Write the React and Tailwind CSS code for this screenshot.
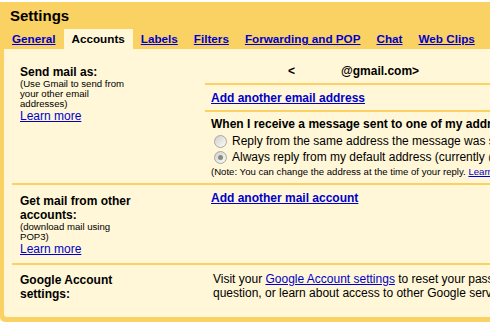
import React from 'react';

const tabs = ['General', 'Accounts', 'Labels', 'Filters', 'Forwarding and POP', 'Chat', 'Web Clips'];

const Radio = ({ checked }) => (
    <span className="ml-[3px] mr-[5px] w-[13px] h-[13px] rounded-full border border-[#a9a9a4] bg-gradient-to-br from-[#d2d2cc] to-[#fafaf8] flex items-center justify-center shrink-0">
        {checked && <span className="w-[5px] h-[5px] rounded-full bg-[#8a8a86]" />}
    </span>
);

const SideLabel = ({ title, note }) => (
    <div className="w-[193px] pl-2 shrink-0">
        <div className="w-[115px]">
            <h3 className="text-[12px] font-bold leading-[14px]">{title}</h3>
            {note && <p className="text-[9.6px] leading-[10px]">{note}</p>}
            {note && <a href="#" className="block text-[12px] leading-[14px] text-[#0000cc] underline">Learn more</a>}
        </div>
    </div>
);

const App = () => {
    return (
        <div className="w-[490px] h-[322px] overflow-hidden bg-white text-black font-['Liberation_Sans',Arial,sans-serif]">
            <div className="mt-[2px] h-[320px] w-[620px] bg-[#fad163] rounded-bl-[5px] flex flex-col">
                <h1 className="h-[27px] pl-[10px] pt-[5px] text-[15px] font-bold leading-[18px]">Settings</h1>

                {/* Tabs */}
                <nav className="flex h-[20px] pl-[4px]">
                    {tabs.map((t) =>
                        t === 'Accounts' ? (
                            <span key={t} className="px-2 flex items-center bg-[#fff7d7] text-[11.7px] font-bold">{t}</span>
                        ) : (
                            <a key={t} href="#" className="px-2 flex items-center text-[11.7px] font-bold text-[#0000cc] underline">{t}</a>
                        )
                    )}
                </nav>

                {/* Panel */}
                <div className="flex-1 ml-[4px] mb-[5px] bg-[#fff7d7] rounded-bl-[3px] flex flex-col">
                    <div className="ml-[8px] flex flex-col flex-1">
                        {/* Send mail as */}
                        <section className="h-[136px] flex border-b-2 border-[#fad163]">
                            <div className="pt-[16px]">
                                <SideLabel title="Send mail as:" note="(Use Gmail to send from your other email addresses)" />
                            </div>
                            <div className="flex-1 flex flex-col">
                                <div className="h-[36px] pt-[15px] border-b-2 border-[#fad163] flex text-[12px] font-bold leading-[14px]">
                                    <span className="ml-[83px]">&lt;</span>
                                    <span className="ml-[46px]">@gmail.com&gt;</span>
                                </div>
                                <div className="h-[27px] pl-[6px] border-b-2 border-[#fad163] flex items-center">
                                    <a href="#" className="text-[12px] font-bold text-[#0000cc] underline">Add another email address</a>
                                </div>
                                <div className="pl-[6px] pt-[5px] whitespace-nowrap">
                                    <p className="text-[12px] font-bold leading-[14px]">When I receive a message sent to one of my addresses:</p>
                                    <label className="mt-[2px] h-[16px] flex items-center text-[12px]">
                                        <Radio />
                                        Reply from the same address the message was sent to
                                    </label>
                                    <label className="h-[16px] flex items-center text-[12px]">
                                        <Radio checked />
                                        Always reply from my default address (currently @gmail.com)
                                    </label>
                                    <p className="mt-[2px] text-[9.6px] leading-[10px]">
                                        (Note: You can change the address at the time of your reply. <a href="#" className="text-[#0000cc] underline">Learn more</a>)
                                    </p>
                                </div>
                            </div>
                        </section>

                        {/* Get mail */}
                        <section className="h-[80px] flex border-b-2 border-[#fad163]">
                            <div className="pt-[9px]">
                                <SideLabel title="Get mail from other accounts:" note="(download mail using POP3)" />
                            </div>
                            <div className="flex-1 pl-[6px] pt-[6px] text-[12px] leading-[14px]">
                                <a href="#" className="font-bold text-[#0000cc] underline">Add another mail account</a>
                            </div>
                        </section>

                        {/* Google Account */}
                        <section className="flex-1 flex">
                            <div className="pt-[8px]">
                                <SideLabel title="Google Account settings:" />
                            </div>
                            <div className="flex-1 pl-[8px] pt-[7px] text-[12px] leading-[14px] whitespace-nowrap">
                                <p>
                                    Visit your <a href="#" className="text-[#0000cc] underline">Google Account settings</a> to reset your password and security
                                </p>
                                <p>question, or learn about access to other Google services.</p>
                            </div>
                        </section>
                    </div>
                </div>
            </div>
        </div>
    );
};

export default App;
